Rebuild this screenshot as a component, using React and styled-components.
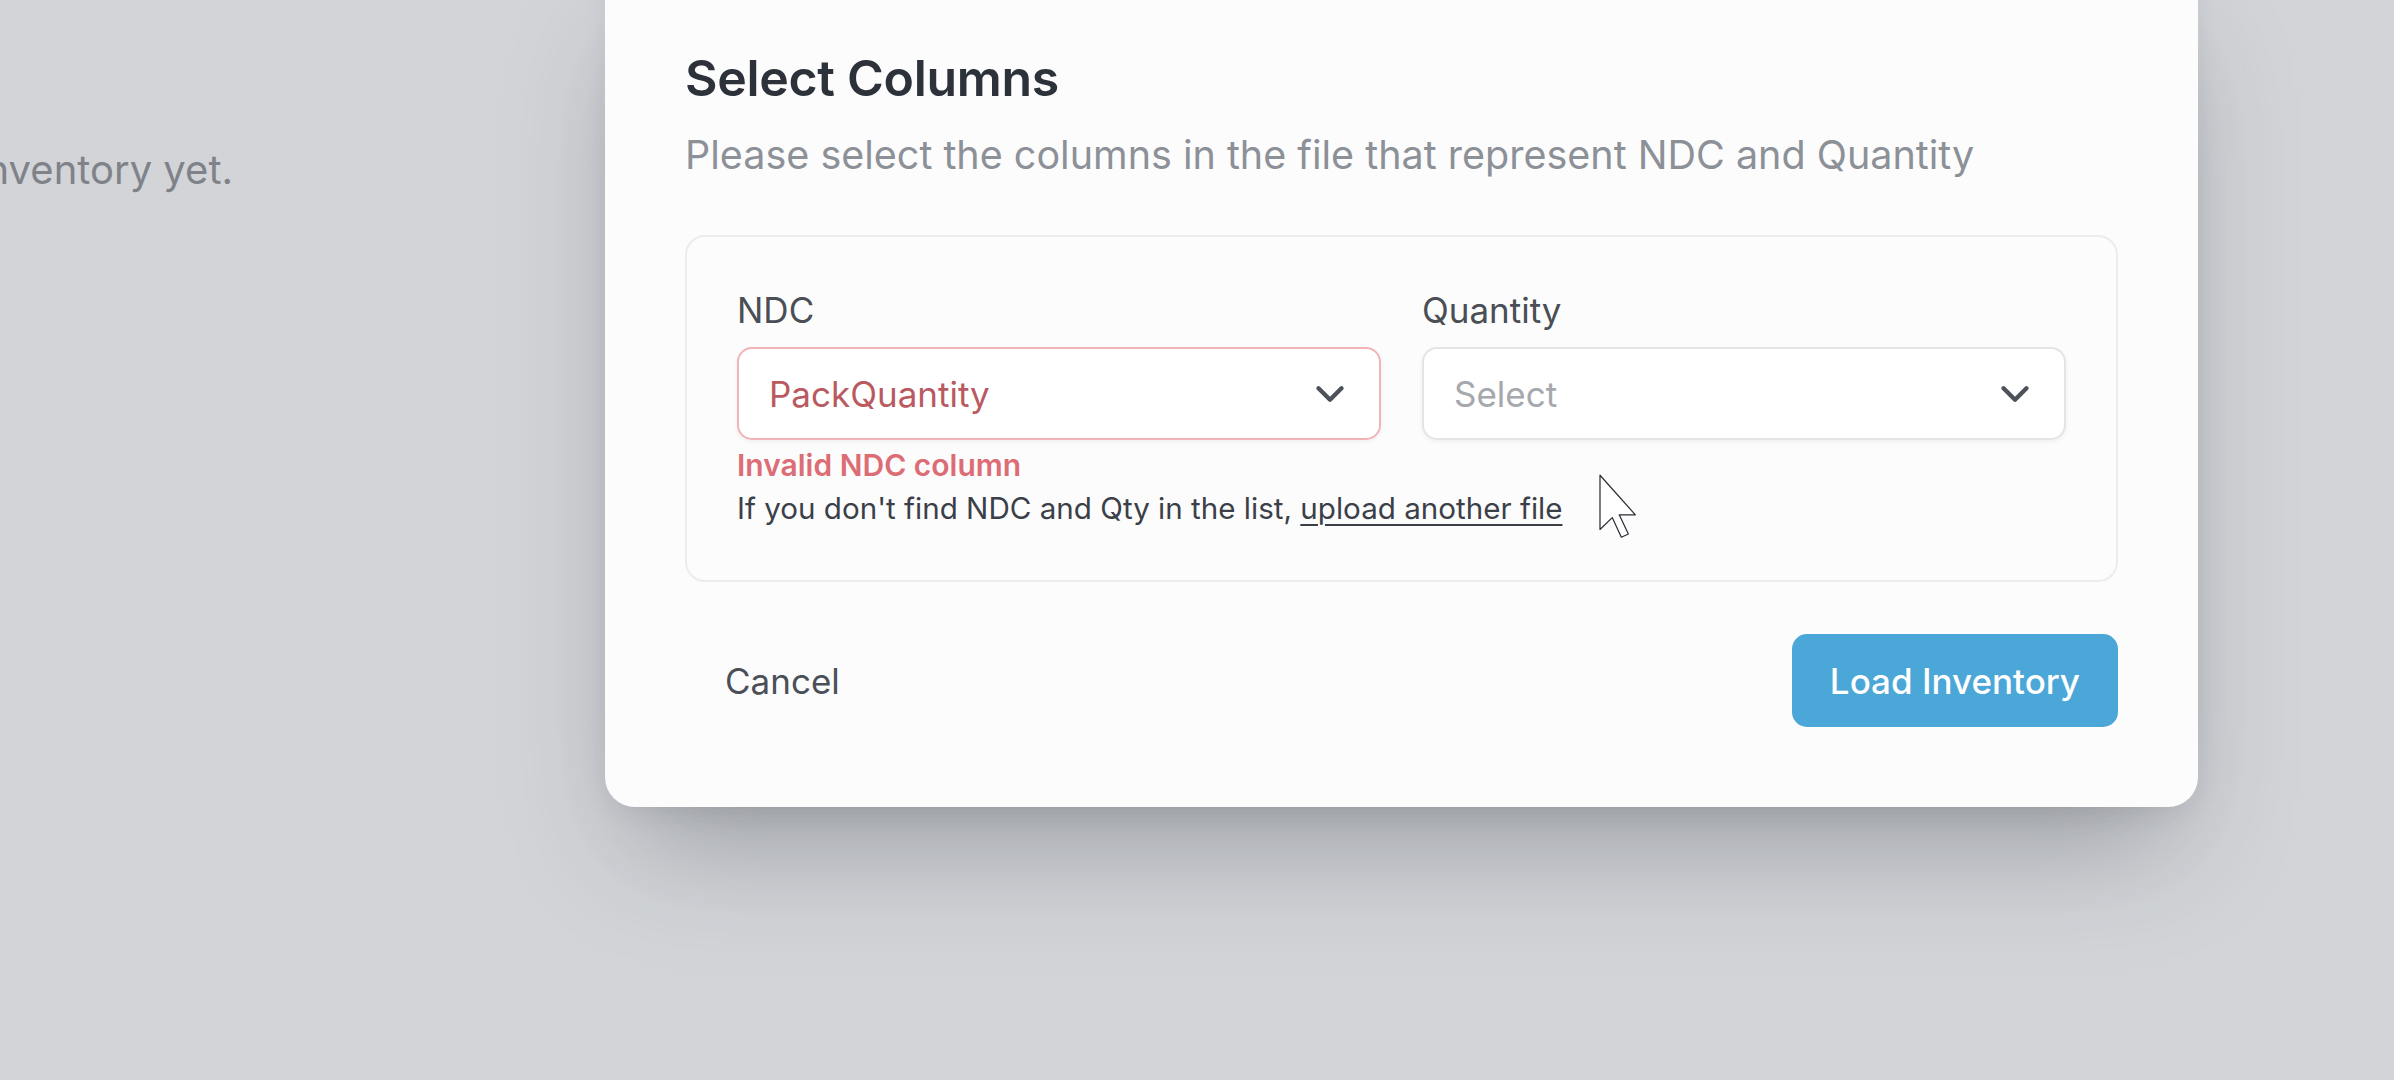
import React from 'react'
import styled, { createGlobalStyle } from 'styled-components'
import { ChevronDown } from 'lucide-react'

const GlobalStyle = createGlobalStyle`
  html, body {
    margin: 0;
    padding: 0;
    height: 100%;
    background: #d2d4d8;
    overflow: hidden;
  }
  body {
    font-family: Inter, 'Noto Sans', 'Liberation Sans', sans-serif;
    -webkit-font-smoothing: antialiased;
  }
`

const Page = styled.div`
  display: flex;
  align-items: flex-start;
  width: 2394px;
  height: 1080px;
  overflow: hidden;
`

const EmptyState = styled.div`
  display: flex;
  justify-content: flex-end;
  flex: 0 0 233px;
  overflow: hidden;
  padding-top: 140px;
  white-space: nowrap;
  font-size: 40px;
  line-height: 60px;
  color: #7f8389;
`

const Modal = styled.div`
  position: relative;
  flex: 0 0 1593px;
  box-sizing: border-box;
  margin-left: 372px;
  margin-top: -37px;
  padding: 80px;
  background: #fcfcfd;
  border-radius: 30px;
  box-shadow: 0 60px 110px -30px rgba(40, 45, 55, 0.35),
    0 10px 30px -10px rgba(40, 45, 55, 0.12);
`

const Title = styled.h2`
  margin: 0;
  font-size: 50px;
  line-height: 70px;
  font-weight: 600;
  color: #2c313a;
  letter-spacing: -0.3px;
`

const Subtitle = styled.p`
  margin: 12px 0 0;
  font-size: 39.5px;
  line-height: 60px;
  color: #8c9097;
`

const Panel = styled.div`
  margin-top: 50px;
  padding: 48px 50px 52px;
  border: 2px solid #ececee;
  border-radius: 20px;
`

const Fields = styled.div`
  display: grid;
  grid-template-columns: 1fr 1fr;
  column-gap: 41px;
`

const Field = styled.div`
  display: flex;
  flex-direction: column;
`

const Label = styled.label`
  font-size: 35px;
  line-height: 50px;
  color: #4a4e55;
  margin-bottom: 12px;
`

const SelectBox = styled.div`
  display: flex;
  align-items: center;
  justify-content: space-between;
  box-sizing: border-box;
  height: 93px;
  padding: 0 26px 0 30px;
  background: #ffffff;
  border: 2px solid ${({ $invalid }) => ($invalid ? '#f1b4b7' : '#e3e4e6')};
  border-radius: 15px;
  box-shadow: 0 2px 4px rgba(20, 25, 35, 0.05);
  font-size: 35px;
  color: ${({ $placeholder, $invalid }) =>
    $invalid ? '#b95a60' : $placeholder ? '#a5a8ad' : '#2c313a'};

  svg {
    color: #4d525a;
  }
`

const ErrorText = styled.div`
  margin-top: 5px;
  font-size: 30px;
  line-height: 40px;
  font-weight: 600;
  color: #dc6d75;
`

const HelpText = styled.div`
  margin-top: 3px;
  font-size: 29.6px;
  line-height: 40px;
  color: #3b4048;

  a {
    color: #3b4048;
    text-decoration: underline;
    text-underline-offset: 5px;
    text-decoration-thickness: 2px;
  }
`

const Footer = styled.div`
  display: flex;
  justify-content: space-between;
  align-items: center;
  margin-top: 52px;
`

const Button = styled.button`
  height: 93px;
  padding: 0 ${({ $primary }) => ($primary ? 38 : 40)}px;
  border: none;
  border-radius: 15px;
  font-family: inherit;
  font-size: 35px;
  font-weight: ${({ $primary }) => ($primary ? 500 : 400)};
  background: ${({ $primary }) => ($primary ? '#4ba7d7' : 'transparent')};
  color: ${({ $primary }) => ($primary ? '#ffffff' : '#4b5058')};
  cursor: pointer;
`

const Cursor = styled.svg`
  position: absolute;
  left: 986px;
  top: 507px;
`

const Select = ({ value, placeholder, invalid }) => (
  <SelectBox $invalid={invalid} $placeholder={!value}>
    <span>{value || placeholder}</span>
    <ChevronDown size={46} strokeWidth={2.3} />
  </SelectBox>
)

export default function App() {
  return (
    <>
      <GlobalStyle />
      <Page>
        <EmptyState>You have not uploaded any inventory yet.</EmptyState>
        <Modal>
          <Title>Select Columns</Title>
          <Subtitle>Please select the columns in the file that represent NDC and Quantity</Subtitle>
          <Panel>
            <Fields>
              <Field>
                <Label>NDC</Label>
                <Select value="PackQuantity" invalid />
                <ErrorText>Invalid NDC column</ErrorText>
              </Field>
              <Field>
                <Label>Quantity</Label>
                <Select placeholder="Select" />
              </Field>
            </Fields>
            <HelpText>
              If you don't find NDC and Qty in the list, <a href="#">upload another file</a>
            </HelpText>
          </Panel>
          <Footer>
            <Button>Cancel</Button>
            <Button $primary>Load Inventory</Button>
          </Footer>
          <Cursor width="46" height="70" viewBox="0 0 13 20">
            <path
              d="M2.5 1.5 L2.5 17 L6 13.6 L8.6 19.2 L10.6 18.3 L8 12.8 L12.6 12.8 Z"
              fill="#ffffff"
              stroke="#2a2d33"
              strokeWidth="0.35"
              strokeLinejoin="round"
            />
          </Cursor>
        </Modal>
      </Page>
    </>
  )
}
